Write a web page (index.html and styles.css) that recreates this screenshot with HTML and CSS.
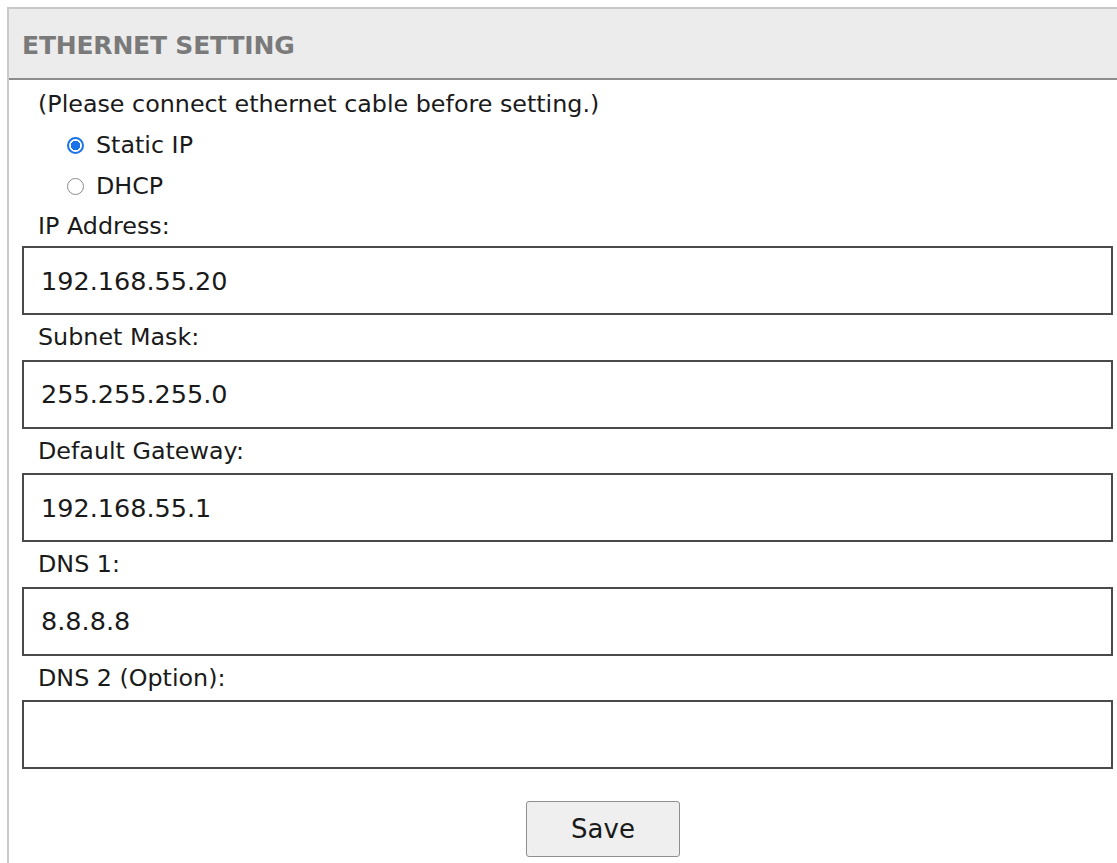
FILE: index.html
```html
<!DOCTYPE html>
<html lang="en">
<head>
<meta charset="utf-8">
<title>Ethernet Setting</title>
<link rel="stylesheet" href="styles.css">
</head>
<body>
<section class="panel">
  <header class="panel-head">ETHERNET SETTING</header>
  <form class="panel-body">
    <p class="note">(Please connect ethernet cable before setting.)</p>
    <div class="modes">
      <label class="mode"><input type="radio" name="mode" class="radio" checked><span>Static IP</span></label>
      <label class="mode"><input type="radio" name="mode" class="radio"><span>DHCP</span></label>
    </div>
    <div class="field">
      <label class="field-label" for="ip">IP Address:</label>
      <input class="field-input" id="ip" type="text" value="192.168.55.20">
    </div>
    <div class="field">
      <label class="field-label" for="mask">Subnet Mask:</label>
      <input class="field-input" id="mask" type="text" value="255.255.255.0">
    </div>
    <div class="field">
      <label class="field-label" for="gw">Default Gateway:</label>
      <input class="field-input" id="gw" type="text" value="192.168.55.1">
    </div>
    <div class="field">
      <label class="field-label" for="dns1">DNS 1:</label>
      <input class="field-input" id="dns1" type="text" value="8.8.8.8">
    </div>
    <div class="field">
      <label class="field-label" for="dns2">DNS 2 (Option):</label>
      <input class="field-input" id="dns2" type="text" value="">
    </div>
    <div class="actions">
      <button type="button" class="btn-save">Save</button>
    </div>
  </form>
</section>
</body>
</html>
```

FILE: styles.css
```css
html {
  overflow: hidden;
}

body {
  margin: 0;
  background: #ffffff;
  font-family: "DejaVu Sans", "Liberation Sans", sans-serif;
  color: #1a1a1a;
}

.panel {
  box-sizing: border-box;
  width: 1121px;
  margin: 7px 0 0 7px;
  border: 2px solid #c9c9c9;
  border-bottom: none;
  min-height: 860px;
}

.panel-head {
  box-sizing: border-box;
  height: 71px;
  padding: 3px 0 0 13px;
  display: flex;
  align-items: center;
  background: #ececec;
  border-bottom: 2px solid #8c8c8c;
  color: #7a7a7a;
  font-weight: bold;
  font-size: 25px;
  letter-spacing: -0.2px;
}

.panel-body {
  display: flex;
  flex-direction: column;
  padding: 4px 13px 0 13px;
}

.note {
  margin: 0;
  padding-left: 16px;
  font-size: 23.8px;
  line-height: 41px;
}

.modes {
  display: flex;
  flex-direction: column;
  padding-left: 45px;
}

.mode {
  display: flex;
  align-items: center;
  gap: 12px;
  font-size: 23.8px;
  line-height: 41px;
}

.radio {
  appearance: none;
  -webkit-appearance: none;
  box-sizing: border-box;
  width: 17px;
  height: 17px;
  margin: 0;
  border: 1px solid #8a8a8a;
  border-radius: 50%;
  background: #ffffff;
}

.radio:checked {
  border: 2px solid #1a73e8;
  background: radial-gradient(circle, #1a73e8 0 4.5px, #ffffff 5px);
}

.field {
  display: flex;
  flex-direction: column;
}

.field-label {
  padding-left: 16px;
  font-size: 23.8px;
  line-height: 39px;
}

.field + .field .field-label {
  line-height: 44.5px;
}

.field-input {
  box-sizing: border-box;
  width: 100%;
  height: 69px;
  margin: 0;
  padding: 0 0 0 17px;
  border: 2px solid #4a4a4a;
  border-radius: 0;
  font-family: inherit;
  font-size: 25.5px;
  color: #1a1a1a;
  background: #ffffff;
  outline: none;
}

.actions {
  display: flex;
  justify-content: center;
  padding: 32px 0 0 71px;
}

.btn-save {
  box-sizing: border-box;
  width: 154px;
  height: 56px;
  border: 1px solid #8f8f8f;
  border-radius: 3px;
  background: #efefef;
  font-family: inherit;
  font-size: 26px;
  color: #1a1a1a;
}
```
